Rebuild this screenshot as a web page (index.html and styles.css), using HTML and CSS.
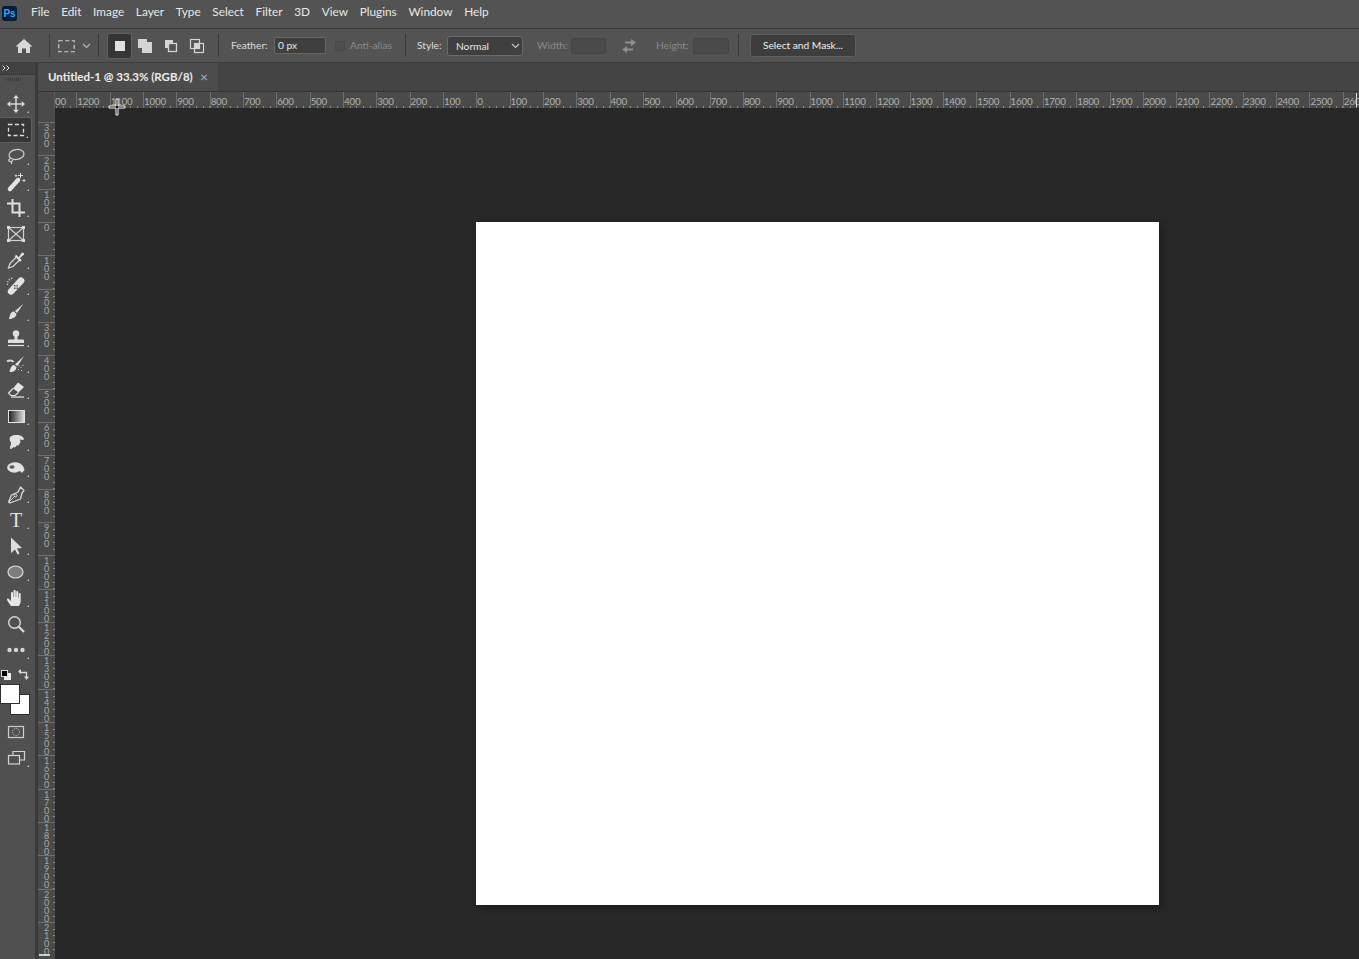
FILE: index.html
```html
<!DOCTYPE html>
<html lang="en">
<head>
<meta charset="utf-8">
<title>Photoshop</title>
<link rel="stylesheet" href="styles.css">
</head>
<body>
<div class="app">
  <header class="menubar">
    <div class="ps-logo">Ps</div>
    <nav class="menu">
      <span>File</span><span>Edit</span><span>Image</span><span>Layer</span><span>Type</span><span>Select</span><span>Filter</span><span>3D</span><span>View</span><span>Plugins</span><span>Window</span><span>Help</span>
    </nav>
  </header>

  <section class="options">
    <svg class="home" width="18" height="16" viewBox="0 0 18 16"><path fill="#d8d8d8" d="M9 1 17.500 8.600H15V15h-4v-4.500H7V15H3V8.600H.5z"/></svg>
    <i class="sep sep-a"></i>
    <svg class="marq" width="18" height="14" viewBox="0 0 18 14"><rect x=".75" y="1.750" width="15.500" height="11" fill="none" stroke="#cfcfcf" stroke-width="1.200" stroke-dasharray="4 2.500"/></svg>
    <svg class="chev" width="9" height="6" viewBox="0 0 9 6"><path d="M1 1l3.500 3.500L8 1" fill="none" stroke="#b5b5b5" stroke-width="1.200"/></svg>
    <i class="sep sep-b"></i>
    <div class="mode-on"><svg width="12" height="12" viewBox="0 0 12 12"><rect x="1" y="1" width="10" height="10" fill="#e0e0e0"/></svg></div>
    <svg class="mode" width="16" height="16" viewBox="0 0 16 16"><path fill="#d4d4d4" d="M1 1h9v3h5v11H5v-5H1z"/></svg>
    <svg class="mode mode-c" width="16" height="16" viewBox="0 0 16 16"><path fill="#d4d4d4" d="M2 2h8v3H5v5H2z"/><rect x="5.500" y="5.500" width="8" height="8" fill="none" stroke="#d4d4d4" stroke-width="1.300"/></svg>
    <svg class="mode mode-c" width="16" height="16" viewBox="0 0 16 16"><rect x="1.500" y="1.500" width="9" height="9" fill="none" stroke="#d4d4d4" stroke-width="1.200"/><rect x="5.500" y="5.500" width="9" height="9" fill="none" stroke="#d4d4d4" stroke-width="1.200"/><rect x="5.500" y="5.500" width="5" height="5" fill="#d4d4d4"/></svg>
    <i class="sep sep-c"></i>
    <label class="lbl lbl-feather">Feather:</label>
    <div class="input input-feather">0 px</div>
    <div class="check"></div>
    <label class="lbl dim lbl-anti">Anti-alias</label>
    <i class="sep sep-d"></i>
    <label class="lbl lbl-style">Style:</label>
    <div class="select"><span>Normal</span><svg width="9" height="6" viewBox="0 0 9 6"><path d="M1 1l3.500 3.500L8 1" fill="none" stroke="#c8c8c8" stroke-width="1.200"/></svg></div>
    <label class="lbl dim lbl-width">Width:</label>
    <div class="input input-dim input-w"></div>
    <svg class="swap" width="16" height="14" viewBox="0 0 16 14"><path fill="#8f8f8f" d="M10 0l5 3.500L10 7V4.500H4v-2h6zM6 7v2.500h6v2H6V14L1 10.500z"/></svg>
    <label class="lbl dim lbl-height">Height:</label>
    <div class="input input-dim input-h"></div>
    <i class="sep sep-e"></i>
    <div class="btn">Select and Mask...</div>
  </section>

  <div class="workspace">
    <aside class="toolbar">
      <div class="collapse"><svg width="8" height="6" viewBox="0 0 8 6"><path d="M.5.500 3 3 .5 5.500M4.500.5 7 3 4.500 5.500" fill="none" stroke="#dcdcdc"/></svg></div>
      <div class="grip"></div>

      <div class="tool mark"><svg width="20" height="20" viewBox="0 0 20 20"><path d="M10 3v14M3 10h14" stroke="#d8d8d8" stroke-width="1.500"/><path fill="#d8d8d8" d="M10 1l3 3.200H7zM10 19l3-3.200H7zM1 10l3.200-3v6zM19 10l-3.200-3v6z"/></svg></div>
      <div class="tool active mark"><svg width="20" height="20" viewBox="0 0 20 20"><rect x="2.500" y="4.500" width="15" height="11" fill="none" stroke="#dcdcdc" stroke-width="1.300" stroke-dasharray="4 2.400"/></svg></div>
      <div class="tool mark nudge"><svg width="20" height="20" viewBox="0 0 20 20"><ellipse cx="10.500" cy="7.500" rx="7.500" ry="5" fill="none" stroke="#d0d0d0" stroke-width="1.200" transform="rotate(-8 10.500 7.500)"/><path d="M4.500 11.500c-2 .5-2.500 2.500-.5 3 1.500.3 2.500 0 2.500-1.500M5.500 14v3" fill="none" stroke="#d0d0d0" stroke-width="1.200"/></svg></div>
      <div class="tool mark"><svg width="20" height="20" viewBox="0 0 20 20"><path d="M4 17 12 8" stroke="#e4e4e4" stroke-width="4.400" stroke-linecap="round"/><path d="M14.500 1v5M12 3.500h5M18 7v3M16.500 8.500h3M10 2.500v2.500M8.800 3.700h2.500" stroke="#d8d8d8" stroke-width="1"/></svg></div>
      <div class="tool mark"><svg width="20" height="20" viewBox="0 0 20 20"><path d="M6.500 1v13.500H19M1 5.500h12.500V19" fill="none" stroke="#e0e0e0" stroke-width="2"/></svg></div>
      <div class="tool"><svg width="20" height="20" viewBox="0 0 20 20"><rect x="2.500" y="3.500" width="15" height="13" fill="none" stroke="#cfcfcf" stroke-width="1.200"/><path d="M2.500 3.500 17.500 16.500M17.500 3.500 2.500 16.500" stroke="#cfcfcf" stroke-width="1.200"/><path fill="#dcdcdc" d="M1 2h3v3H1zM16 2h3v3h-3zM1 15h3v3H1zM16 15h3v3h-3z"/></svg></div>
      <div class="tool mark"><svg width="20" height="20" viewBox="0 0 20 20"><path d="M10.500 7 4 13.500 2.500 18 7 16.500 13.500 10" fill="none" stroke="#d6d6d6" stroke-width="1.300"/><path d="M9.500 5.500l5.500 5.500" stroke="#e0e0e0" stroke-width="2.200"/><path d="M12.500 7.500 16 2.500a1.800 1.800 0 0 1 2 2L13.500 8.500z" fill="#e0e0e0"/></svg></div>
      <div class="tool mark"><svg width="20" height="20" viewBox="0 0 20 20"><path d="M2.500 13.500 12.500 2.500a3 3 0 0 1 5 4.500L7 18a3.200 3.200 0 0 1-4.500-4.500z" fill="#e2e2e2"/><path d="M8 9h1.500v1.500H8zM10.500 9h1.500v1.500h-1.500zM8 11.500h1.500V13H8zM10.500 11.500h1.500V13h-1.500z" fill="#555"/><path d="M1.500 9a6 6 0 0 1 6-7" fill="none" stroke="#d0d0d0" stroke-width="1.300" stroke-dasharray="1.300 1.300"/></svg></div>
      <div class="tool mark"><svg width="20" height="20" viewBox="0 0 20 20"><path d="M17.500 1.800 11 11 9 9z" fill="#e0e0e0"/><path d="M8 9.500c-3 0-4 2.500-5 7.500 3.500 0 7-1.500 7.500-5z" fill="#e0e0e0"/></svg></div>
      <div class="tool mark nudge"><svg width="20" height="20" viewBox="0 0 20 20"><circle cx="10" cy="4.500" r="3.200" fill="#e0e0e0"/><path fill="#e0e0e0" d="M8.500 7h3v3.500H17a1 1 0 0 1 1 1V14H2v-2.500a1 1 0 0 1 1-1h5.500z"/><path stroke="#e0e0e0" stroke-width="1.300" d="M2 16.500h16"/></svg></div>
      <div class="tool mark nudge"><svg width="20" height="20" viewBox="0 0 20 20"><path fill="#e4e4e4" d="M18 1 11.500 11 9 9.500zM8 10c-2.500 0-3.500 3-4.500 7 3.500.5 7-1.500 7-5z"/><path d="M1 6.500c2-1.500 5-1.500 6.500.5" fill="none" stroke="#d8d8d8" stroke-width="2"/><path d="M13 10.500v1M15 12v1M12.500 14v1M15.500 15v1M17 10v1" stroke="#cfcfcf"/></svg></div>
      <div class="tool mark"><svg width="20" height="20" viewBox="0 0 20 20"><path fill="#e4e4e4" d="M12 2.500 18 7l-5.500 5.500-5.500-4z"/><path fill="none" stroke="#e0e0e0" stroke-width="1.200" d="M7 8.500 2.500 13l2.500 2.500h4l3.500-3"/><path stroke="#e0e0e0" stroke-width="1.300" d="M5 17h13"/></svg></div>
      <div class="tool mark"><div class="gradient"></div></div>
      <div class="tool mark nudge"><svg width="20" height="20" viewBox="0 0 20 20"><path fill="#e2e2e2" d="M4 4c3-2.500 9-2.500 12-.5 2 1 2.500 3 1 3.500l-3-.5c1 2 0 4-1 5-.5 1.500-1.500 1.500-2 .5-1 2-2.500 3-3.500 2-1.500 2-3 2.500-3.500 1.500-.5-2 1.500-4 1-6-1-1-2-3.500-1-5.500z"/></svg></div>
      <div class="tool mark nudge"><svg width="20" height="20" viewBox="0 0 20 20"><path fill="#e2e2e2" d="M1.500 7c1.500-3 6-4.500 10-3.500 4 1 6.500 4 7 7.500l-2.500 3c-1-1.500-2-2-3.500-1.500-3 1.500-5 1.500-7.500.5-2.500-1-4.500-3-3.500-6z"/><ellipse cx="6" cy="8" rx="2.600" ry="1.800" fill="#5a5a5a"/></svg></div>
      <div class="tool mark nudge"><svg width="20" height="20" viewBox="0 0 20 20"><path d="M14.500 2 18 5.500 16 8l-1.500 6L4 18l-1.500-1 3-7 6.500-3z" fill="none" stroke="#d8d8d8" stroke-width="1.300" stroke-linejoin="round"/><path d="M3 17l6-6" stroke="#d8d8d8"/><circle cx="9.500" cy="10.500" r="1.400" fill="none" stroke="#d8d8d8"/></svg></div>
      <div class="tool mark"><span class="type-t">T</span></div>
      <div class="tool mark"><svg width="20" height="20" viewBox="0 0 20 20"><path fill="#dedede" d="M5 1.500 16 12l-5 .5 2.500 5-2 1-2.500-5-4 3.500z"/></svg></div>
      <div class="tool mark"><svg width="20" height="20" viewBox="0 0 20 20"><ellipse cx="9.500" cy="10" rx="7.500" ry="6" fill="#7d7d7d" stroke="#dcdcdc" stroke-width="1.200"/></svg></div>
      <div class="tool mark"><svg width="20" height="20" viewBox="0 0 20 20"><path fill="#e6e6e6" d="M5 18c-1.500-2-3-4-4-6-.5-1.500 1-2 2-1l2 2V5c0-1.500 2-1.500 2 0v4h.5V3c0-1.500 2.200-1.500 2.200 0v6h.5V4c0-1.500 2-1.500 2 0v6h.5V6c0-1.500 2-1.500 2 0v7c0 2-1 4-2 5z"/></svg></div>
      <div class="tool"><svg width="20" height="20" viewBox="0 0 20 20"><circle cx="8.500" cy="8.500" r="5.800" fill="none" stroke="#d8d8d8" stroke-width="1.400"/><path d="M12.800 12.800 18 18" stroke="#d8d8d8" stroke-width="2.200"/></svg></div>
      <div class="tool mark"><svg width="20" height="20" viewBox="0 0 20 20"><circle cx="3.500" cy="10" r="2.200" fill="#d4d4d4"/><circle cx="10" cy="10" r="2.200" fill="#d4d4d4"/><circle cx="16.500" cy="10" r="2.200" fill="#d4d4d4"/></svg></div>

      <div class="colors">
        <div class="mini-bg"></div>
        <div class="mini-fg"></div>
        <svg class="swap-color" width="11" height="11" viewBox="0 0 11 11"><path d="M2 1v2.500h6.500V9" fill="none" stroke="#d8d8d8" stroke-width="1.300"/><path fill="#d8d8d8" d="M0 2.500 3 0v5zM6 7.500h5L8.500 11z"/></svg>
        <div class="swatch-bg"></div>
        <div class="swatch-fg"></div>
      </div>

      <div class="tool"><svg width="20" height="20" viewBox="0 0 20 20"><rect x="2.500" y="4.500" width="15" height="11" fill="none" stroke="#d0d0d0" stroke-width="1.200"/><circle cx="10" cy="10" r="3.600" fill="none" stroke="#d0d0d0" stroke-dasharray="1.200 1.200"/></svg></div>
      <div class="tool mark"><svg width="20" height="20" viewBox="0 0 20 20"><path d="M7 7V3.500h11.500V12H14" fill="none" stroke="#d4d4d4" stroke-width="1.200"/><rect x="2.500" y="7.500" width="11" height="8.500" fill="none" stroke="#d4d4d4" stroke-width="1.200"/></svg></div>
    </aside>

    <main class="main">
      <div class="tabs">
        <div class="tab"><span class="tab-title">Untitled-1 @ 33.3% (RGB/8)</span><b class="close">&#215;</b></div>
      </div>
      <div class="ruler-row">
        <div class="corner"></div>
        <div class="ruler-h">
          <div class="ticks-h">
            <span>1300</span><span>1200</span><span>1100</span><span>1000</span><span>900</span><span>800</span><span>700</span><span>600</span><span>500</span><span>400</span><span>300</span><span>200</span><span>100</span><span>0</span><span>100</span><span>200</span><span>300</span><span>400</span><span>500</span><span>600</span><span>700</span><span>800</span><span>900</span><span>1000</span><span>1100</span><span>1200</span><span>1300</span><span>1400</span><span>1500</span><span>1600</span><span>1700</span><span>1800</span><span>1900</span><span>2000</span><span>2100</span><span>2200</span><span>2300</span><span>2400</span><span>2500</span><span>2600</span>
          </div>
        </div>
      </div>
      <div class="stage">
        <div class="ruler-v">
          <div class="ruler-v-gap"></div>
          <span>300</span><span>200</span><span>100</span><span>0</span><span>100</span><span>200</span><span>300</span><span>400</span><span>500</span><span>600</span><span>700</span><span>800</span><span>900</span><span>1000</span><span>1100</span><span>1200</span><span>1300</span><span>1400</span><span>1500</span><span>1600</span><span>1700</span><span>1800</span><span>1900</span><span>2000</span><span>2100</span>
        </div>
        <div class="canvas"><div class="page"></div></div>
      </div>
    </main>
  </div>

  <svg class="cursor" width="20" height="20" viewBox="0 0 20 20"><path d="M9 1h2v7h7v2h-7v7H9v-7H2V8h7z" fill="#111" stroke="#fff" stroke-width="1"/></svg>
  <i class="marker-h"></i>
  <i class="marker-v"></i>
</div>
</body>
</html>
```
FILE: styles.css
```css
* { box-sizing: border-box; }
html, body { margin: 0; padding: 0; background: #282828; }
body { font-family: Lato, "Open Sans", "Liberation Sans", sans-serif; color: #e6e6e6; }
.app { position: relative; width: 1359px; height: 959px; overflow: hidden; display: flex; flex-direction: column; }

/* Menu bar */
.menubar { height: 29px; flex: none; background: #535353; border-bottom: 1px solid #3c3c3c; display: flex; align-items: center; padding: 0 0 5px 2px; }
.ps-logo { width: 15px; height: 15px; margin-top: 4px; border-radius: 3px; background: #001e36; color: #31a8ff; font: bold 10px/15px "Liberation Sans", sans-serif; text-align: center; }
.menu { display: flex; margin-left: 14px; margin-top: 1px; font-size: 11.800px; line-height: 16px; gap: 11.700px; color: #e8e8e8; }

/* Options bar */
.options { height: 34px; flex: none; background: #535353; border-bottom: 1px solid #3c3c3c; display: flex; align-items: center; font-size: 10.200px; }
.home { margin-left: 15px; }
.sep { width: 1px; height: 23px; background: #3a3a3a; flex: none; }
.sep-a { margin-left: 16px; }
.marq { margin-left: 8px; }
.chev { margin-left: 6px; }
.sep-b { margin-left: 7px; }
.mode-on { margin-left: 8px; width: 25px; height: 26px; border-radius: 3px; background: #353535; border: 1px solid #606060; display: flex; align-items: center; justify-content: center; }
.mode { margin-left: 5px; }
.mode-c { margin-left: 10px; }
.sep-c { margin-left: 13px; }
.lbl { line-height: 14px; margin-bottom: 2px; color: #dcdcdc; white-space: nowrap; flex: none; }
.dim { color: #8a8a8a; }
.lbl-feather { margin-left: 12px; width: 37px; }
.input { height: 17px; border: 1px solid #3a3a3a; border-radius: 2px; background: #464646; padding-left: 3px; line-height: 15px; color: #e6e6e6; flex: none; }
.input-feather { width: 52px; margin-left: 6px; background: #3f3f3f; border-color: #666; }
.check { width: 10px; height: 10px; margin-left: 9px; border: 1px solid #484848; border-radius: 2px; background: #4e4e4e; }
.lbl-anti { margin-left: 5px; width: 40px; }
.sep-d { margin-left: 15px; }
.lbl-style { margin-left: 11px; width: 24px; }
.select { width: 76px; height: 20px; margin-left: 6px; margin-top: 1px; border: 1px solid #6a6a6a; border-radius: 3px; background: #3f3f3f; display: flex; align-items: center; justify-content: space-between; padding: 0 2px 0 8px; color: #e6e6e6; }
.lbl-width { margin-left: 14px; width: 29px; }
.input-dim { background: #4a4a4a; height: 16px; border-color: #444; }
.input-w { width: 35px; margin-left: 5px; }
.swap { margin-left: 15px; }
.lbl-height { margin-left: 19px; width: 32px; }
.input-h { width: 36px; margin-left: 5px; }
.sep-e { margin-left: 9px; }
.btn { margin-left: 11px; width: 106px; height: 23px; border: 1px solid #5e5e5e; border-radius: 3px; background: #3d3d3d; text-align: center; line-height: 21px; color: #f0f0f0; }

/* Workspace */
.workspace { flex: 1; display: flex; min-height: 0; }
.toolbar { width: 38px; flex: none; background: #505050; border-right: 3px solid #3a3a3a; display: flex; flex-direction: column; }
.collapse { height: 12px; background: #424242; padding: 2px 0 0 2px; border-bottom: 1px solid #3a3a3a; }
.collapse svg { display: block; }
.grip { height: 16px; background: repeating-linear-gradient(90deg, #3c3c3c 0 1px, transparent 1px 2px) 6px 3px / 15px 3px no-repeat; }
.tool { position: relative; height: 26px; flex: none; width: 32px; display: flex; align-items: center; justify-content: center; }
.tool svg { display: block; }
.nudge { padding-top: 2px; }
.tool.active { background: #363636; border: 1px solid #5e5e5e; border-left: 0; border-radius: 0 3px 3px 0; }
.mark::after { content: ""; position: absolute; right: 3px; bottom: 4px; border: 1.500px solid transparent; border-right-color: #c4c4c4; border-bottom-color: #c4c4c4; }
.gradient { width: 17px; height: 13px; background: linear-gradient(90deg, #222, #ddd); border: 1px solid #e4e4e4; }
.type-t { font: 20px/20px "Liberation Serif", serif; color: #e4e4e4; }

.colors { position: relative; height: 56px; flex: none; }
.mini-bg { position: absolute; left: 4px; top: 10px; width: 7px; height: 7px; background: #eee; }
.mini-fg { position: absolute; left: 1px; top: 7px; width: 7px; height: 7px; background: #000; border: 1px solid #ddd; }
.swap-color { position: absolute; left: 18px; top: 6px; }
.swatch-bg { position: absolute; left: 10px; top: 31px; width: 20px; height: 21px; background: #fff; border: 1px solid #2e2e2e; }
.swatch-fg { position: absolute; left: 0; top: 21px; width: 20px; height: 20px; background: #fff; border: 1px solid #2e2e2e; }

/* Document area */
.main { flex: 1; min-width: 0; display: flex; flex-direction: column; }
.tabs { height: 29px; flex: none; background: #434343; border-bottom: 1px solid #363636; display: flex; }
.tab { width: 180px; height: 28px; background: #4c4c4c; display: flex; align-items: center; padding: 0 0 2px 10px; font-size: 11.500px; font-weight: 700; color: #ececec; }
.tab-title { width: 145px; flex: none; white-space: nowrap; }
.close { margin-left: 7px; font-weight: 400; font-size: 14px; color: #b0b0b0; }

.ruler-row { height: 16px; flex: none; display: flex; background: #4a4a4a; }
.corner { width: 17px; flex: none; background: #4a4a4a; border-right: 1px dotted #6a6a6a; }
.ruler-h { flex: 1; min-width: 0; overflow: hidden; }
.ticks-h { display: flex; margin-left: -12px; }
.ticks-h span { flex: none; width: 33.33px; height: 16px; padding: 3px 0 0; border-left: 1px solid #6e6e6e; font-size: 9.800px; letter-spacing: -.2px; line-height: 13px; color: #b0b0b0; white-space: nowrap; overflow: hidden; background: repeating-linear-gradient(90deg, transparent 0 5.670px, #8a8a8a 5.670px 6.670px) 0 100% / 100% 2px no-repeat; }

.stage { flex: 1; min-height: 0; display: flex; }
.ruler-v { width: 17px; flex: none; background: #4a4a4a; overflow: hidden; }
.ruler-v-gap { height: 14px; background: #4a4a4a; }
.ruler-v span { display: block; height: 33.33px; width: 17px; padding: 1px 5px 0 6px; border-top: 1px solid #6e6e6e; font-size: 9px; line-height: 8px; word-break: break-all; color: #a8a8a8; background: repeating-linear-gradient(180deg, transparent 0 5.670px, #8a8a8a 5.670px 6.670px) 100% 0 / 2px 100% no-repeat; }
.canvas { flex: 1; min-width: 0; background: #282828; padding: 114px 0 0 421px; }
.page { width: 683px; height: 683px; background: #fff; box-shadow: 2px 3px 7px rgba(0,0,0,.35); }

/* Overlays */
.cursor { position: absolute; left: 107px; top: 98px; }
.marker-h { position: absolute; left: 1356px; top: 93px; width: 1px; height: 14px; background: #dcdcdc; }
.marker-v { position: absolute; left: 39px; top: 954px; width: 11px; height: 2px; background: #cfcfcf; }
```
